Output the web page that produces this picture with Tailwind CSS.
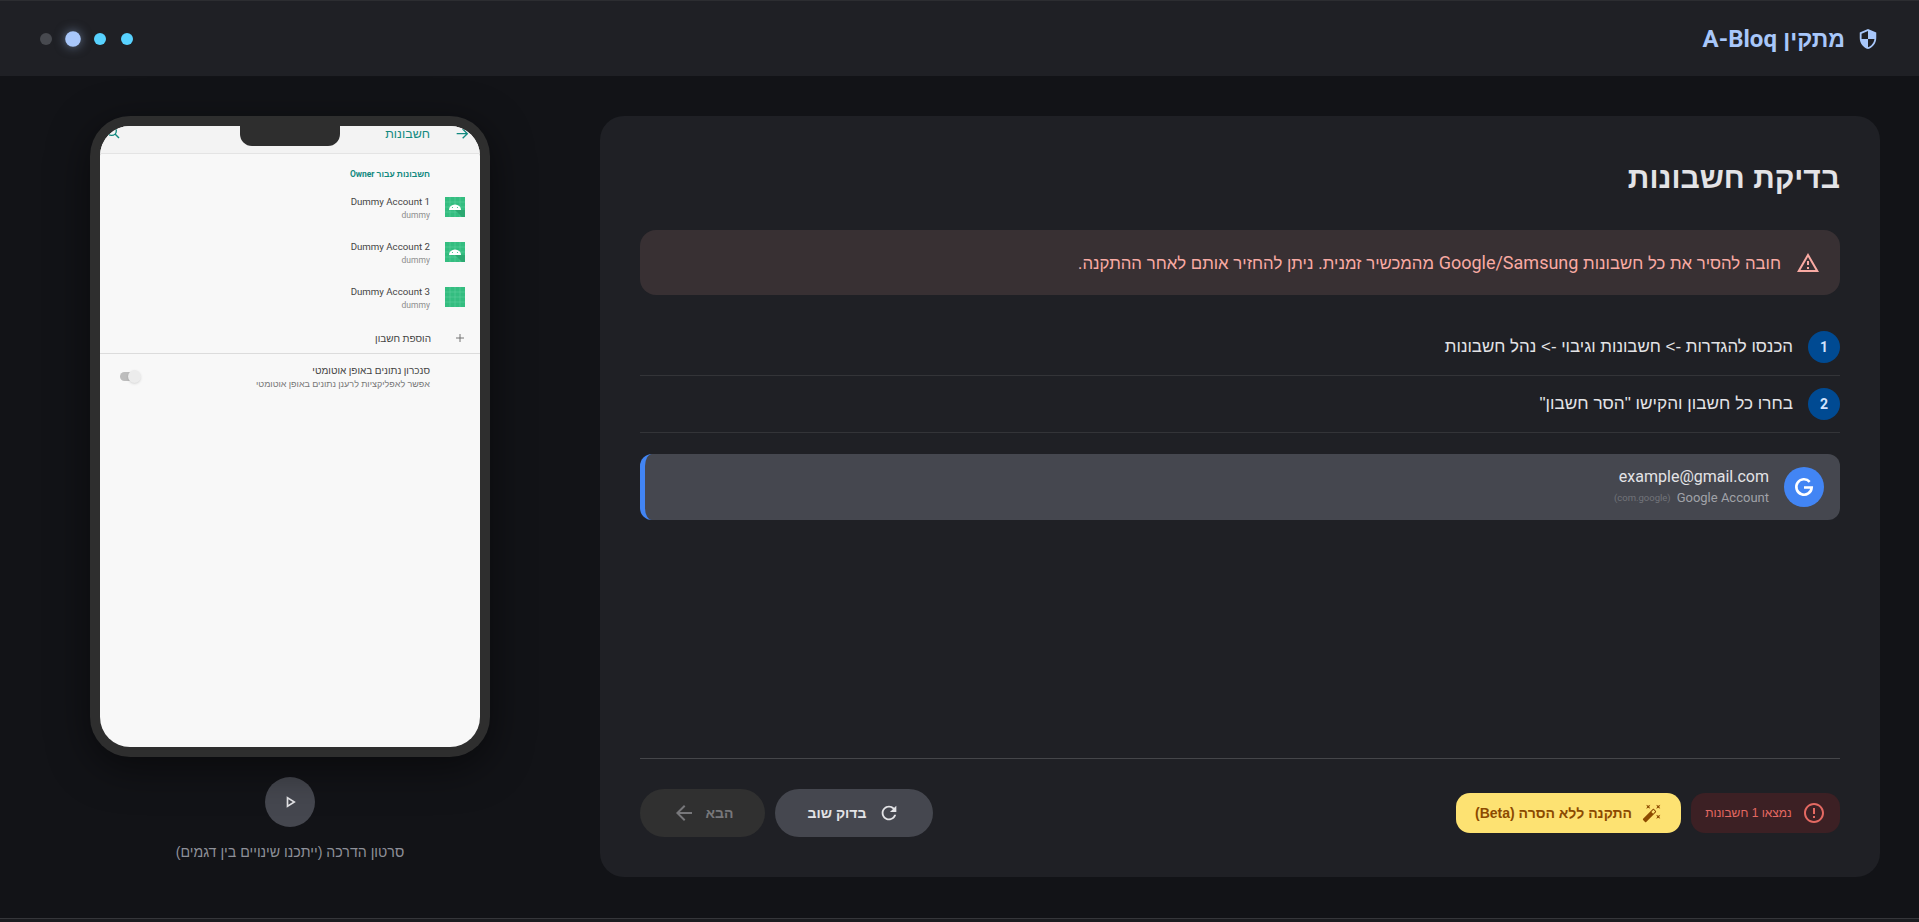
<!DOCTYPE html>
<html lang="he" dir="rtl">
  <head>
    <meta charset="UTF-8" />
    <meta name="viewport" content="width=device-width, initial-scale=1.0" />
    <title>מתקין A-Bloq</title>
    <script src="https://cdn.jsdelivr.net/npm/@tailwindcss/browser@4"></script>
  </head>

  <body class="h-screen overflow-hidden bg-[#121317] font-['Liberation_Sans',sans-serif] text-[#e3e3e6]">
    <div class="flex h-full flex-col">
      <!-- Header -->
      <header class="flex h-[76px] shrink-0 items-center justify-between border-t border-[#2c2d31] bg-[#1f2025] pr-[40px] pl-[40px]">
        <div class="flex items-center gap-[12px] text-[#a8c7fa]">
          <svg class="h-[22px] w-[22px]" viewBox="0 0 24 24" fill="currentColor"><path d="M12 1L3 5v6c0 5.55 3.84 10.74 9 12 5.16-1.26 9-6.45 9-12V5l-9-4zm0 10.99h7c-.53 4.12-3.28 7.79-7 8.94V12H5V6.3l7-3.11v8.8z"/></svg>
          <span class="text-[23px] font-bold leading-none">מתקין <span class="font-['Roboto'] text-[24px]">A-Bloq</span></span>
        </div>
        <!-- Steps -->
        <div class="flex items-center gap-[15px]" dir="ltr">
          <span class="h-[12px] w-[12px] rounded-full bg-[#47494f]"></span>
          <span class="h-[12px] w-[12px] scale-[1.3] rounded-full bg-[#a8c7fa] shadow-[0_0_8px_rgba(168,199,250,0.5)]"></span>
          <span class="h-[12px] w-[12px] rounded-full bg-[#58d2ff]"></span>
          <span class="h-[12px] w-[12px] rounded-full bg-[#58d2ff]"></span>
        </div>
      </header>

      <!-- Content -->
      <main class="flex min-h-0 flex-1 gap-[60px] pt-[40px] pr-[39px] pl-[40px]">
        <!-- Card -->
        <section class="flex h-[761px] flex-1 flex-col rounded-[24px] bg-[#1f2025] px-[40px] pt-[40px] pb-[40px]">
          <h1 class="text-[30px] font-bold leading-[44px] text-[#e3e3e6]">בדיקת חשבונות</h1>

          <div class="mt-[30px] flex h-[65px] items-center gap-[15px] rounded-[16px] bg-[#383033] px-[20px] text-[#f9aaa3]">
            <svg class="h-[24px] w-[24px] shrink-0" viewBox="0 0 24 24" fill="currentColor"><path d="M12 5.99L19.53 19H4.47L12 5.99M12 2L1 21h22L12 2zm1 14h-2v2h2v-2zm0-6h-2v4h2v-4z"/></svg>
            <p class="text-[16.8px]">חובה להסיר את כל חשבונות <span class="font-['Roboto'] text-[18px]">Google/Samsung</span> מהמכשיר זמנית. ניתן להחזיר אותם לאחר ההתקנה.</p>
          </div>

          <ol class="mt-[24px]">
            <li class="flex h-[57px] items-center gap-[15px] border-b border-[#333438]">
              <span class="flex h-[32px] w-[32px] shrink-0 items-center justify-center rounded-full bg-[#004a92] font-['Roboto'] text-[14px] font-bold text-[#d3e3fd]">1</span>
              <span class="text-[16.9px]">הכנסו להגדרות -&gt; חשבונות וגיבוי -&gt; נהל חשבונות</span>
            </li>
            <li class="flex h-[57px] items-center gap-[15px] border-b border-[#333438]">
              <span class="flex h-[32px] w-[32px] shrink-0 items-center justify-center rounded-full bg-[#004a92] font-['Roboto'] text-[14px] font-bold text-[#d3e3fd]">2</span>
              <span class="text-[17.2px]">בחרו כל חשבון והקישו "הסר חשבון"</span>
            </li>
          </ol>

          <!-- Account -->
          <div class="mt-[21px] flex h-[66px] items-center gap-[15px] rounded-[12px] border-l-[5px] border-[#4285f4] bg-[#45474f] pr-[16px] font-['Roboto']">
            <span class="flex h-[40px] w-[40px] shrink-0 items-center justify-center rounded-full bg-[#4285f4]">
              <svg class="h-[22px] w-[22px]" viewBox="0 0 24 24" fill="none" stroke="#fff" stroke-width="2.8"><path d="M18.2 6.3A8.4 8.4 0 1 0 20.4 12.6H12"/></svg>
            </span>
            <div>
              <div class="text-[16px] leading-[20px] text-[#e3e3e6]">example@gmail.com</div>
              <div class="mt-[2px] flex items-center gap-[6px] text-[13px] leading-[18px] text-[#a0a2a8]">
                <span>Google Account</span>
                <span class="text-[9.5px] text-[#72747a]" dir="ltr">(com.google)</span>
              </div>
            </div>
          </div>

          <!-- Footer actions -->
          <div class="mt-auto flex items-center justify-between border-t border-[#45464a] pt-[30px]">
            <div class="flex items-center gap-[10px]">
              <div class="flex h-[40px] w-[149px] items-center justify-center gap-[10px] rounded-[14px] bg-[#3c2024] text-[#e46962]">
                <svg class="h-[24px] w-[24px] shrink-0" viewBox="0 0 24 24" fill="currentColor"><path d="M11 15h2v2h-2zm0-8h2v6h-2zm.99-5C6.47 2 2 6.48 2 12s4.47 10 9.99 10C17.52 22 22 17.52 22 12S17.52 2 11.99 2zM12 20c-4.42 0-8-3.58-8-8s3.58-8 8-8 8 3.58 8 8-3.58 8-8 8z"/></svg>
                <span class="text-[12px]">נמצאו 1 חשבונות</span>
              </div>
              <button class="flex h-[40px] w-[225px] items-center justify-center gap-[10px] rounded-[14px] bg-[#fde272] text-[#8c4a00]">
                <svg class="h-[20px] w-[20px] shrink-0" viewBox="0 0 24 24" fill="currentColor"><path d="M7.5 5.6L10 7 8.6 4.5 10 2 7.5 3.4 5 2l1.4 2.5L5 7zm12 9.8L17 14l1.4 2.5L17 19l2.5-1.4L22 19l-1.4-2.5L22 14zM22 2l-2.5 1.4L17 2l1.4 2.5L17 7l2.5-1.4L22 7l-1.4-2.5zm-7.63 5.29c-.39-.39-1.02-.39-1.41 0L1.29 18.96c-.39.39-.39 1.02 0 1.41l2.34 2.34c.39.39 1.02.39 1.41 0L16.7 11.05c.39-.39.39-1.02 0-1.41l-2.33-2.35zm-1.03 5.49l-2.12-2.12 2.44-2.44 2.12 2.12-2.44 2.44z"/></svg>
                <span class="text-[14px] font-bold">התקנה ללא הסרה (Beta)</span>
              </button>
            </div>
            <div class="flex items-center gap-[10px]">
              <button class="flex h-[48px] w-[158px] items-center justify-center gap-[12px] rounded-full bg-[#45474f] text-[#e3e3e6]">
                <svg class="h-[22px] w-[22px] shrink-0" viewBox="0 0 24 24" fill="currentColor"><path d="M17.65 6.35C16.2 4.9 14.21 4 12 4c-4.42 0-7.99 3.58-7.99 8s3.57 8 7.99 8c3.73 0 6.84-2.55 7.73-6h-2.08c-.82 2.33-3.04 4-5.65 4-3.31 0-6-2.69-6-6s2.69-6 6-6c1.66 0 3.14.69 4.22 1.78L13 11h7V4l-2.35 2.35z"/></svg>
                <span class="text-[14px] font-bold">בדוק שוב</span>
              </button>
              <button class="flex h-[48px] w-[125px] items-center justify-center gap-[10px] rounded-full bg-[#303030] text-[#77777a]">
                <span class="text-[14px] font-bold">הבא</span>
                <svg class="h-[24px] w-[24px] shrink-0" viewBox="0 0 24 24" fill="currentColor"><path d="M20 11H7.83l5.59-5.59L12 4l-8 8 8 8 1.41-1.41L7.83 13H20v-2z"/></svg>
              </button>
            </div>
          </div>
        </section>

        <!-- Phone column -->
        <aside class="flex w-[500px] shrink-0 flex-col items-center">
          <div class="relative h-[641px] w-[400px] rounded-[40px] bg-[#2e2e2e] p-[10px] shadow-[0_10px_40px_rgba(0,0,0,0.5)]">
            <div class="absolute top-[10px] left-1/2 z-10 h-[20px] w-[100px] -translate-x-1/2 rounded-b-[12px] bg-[#2e2e2e]"></div>
            <div class="flex h-full flex-col overflow-hidden rounded-[30px] bg-[#f8f8f8] font-['Roboto','Liberation_Sans',sans-serif] text-[#444]">
              <div class="flex h-[28px] shrink-0 items-start justify-between border-b border-[#e4e4e4] bg-[#f3f3f3] pr-[10px] pl-[5px] text-[#12897f]">
                <div class="flex items-center gap-[24px]">
                  <svg class="mt-[-1px] h-[16px] w-[16px]" viewBox="0 0 24 24" fill="none" stroke="currentColor" stroke-width="2"><path d="M20 11.5H4M11 4.5l-7 7 7 7" transform="matrix(-1 0 0 1 24 0)"/></svg>
                  <span class="text-[12.5px] leading-[16px]">חשבונות</span>
                </div>
                <svg class="mt-[-2px] h-[16px] w-[16px]" viewBox="0 0 24 24" fill="none" stroke="currentColor" stroke-width="2"><circle cx="10" cy="10" r="7"/><path d="M15 15l6 6"/></svg>
              </div>

              <div class="pt-[14px] pr-[50px] text-[8.5px] font-bold leading-[12px] text-[#12897f]">חשבונות עבור Owner</div>

              <div class="mt-[15px] flex h-[45px] items-start gap-[15px] pr-[15px]">
                <svg class="mt-[2px] h-[20px] w-[20px]" viewBox="0 0 20 20"><rect width="20" height="20" fill="#34bd80"/><path d="M10 0v20M0 10h20M5 0v20M15 0v20M0 5h20M0 15h20" stroke="#6fd6a6" stroke-width="0.4"/><path d="M10 13l7 7h3v-7z" fill="#2ca871"/><path d="M4 13a6 5.5 0 0 1 12 0z" fill="#fff"/><circle cx="7.5" cy="10.5" r=".6" fill="#34bd80"/><circle cx="12.5" cy="10.5" r=".6" fill="#34bd80"/></svg>
                <div><div class="text-[9.7px] leading-[14px]">Dummy Account 1</div><div class="text-[8.5px] leading-[12px] text-[#8c8c8c]">dummy</div></div>
              </div>
              <div class="flex h-[45px] items-start gap-[15px] pr-[15px]">
                <svg class="mt-[2px] h-[20px] w-[20px]" viewBox="0 0 20 20"><rect width="20" height="20" fill="#34bd80"/><path d="M10 0v20M0 10h20M5 0v20M15 0v20M0 5h20M0 15h20" stroke="#6fd6a6" stroke-width="0.4"/><path d="M10 13l7 7h3v-7z" fill="#2ca871"/><path d="M4 13a6 5.5 0 0 1 12 0z" fill="#fff"/><circle cx="7.5" cy="10.5" r=".6" fill="#34bd80"/><circle cx="12.5" cy="10.5" r=".6" fill="#34bd80"/></svg>
                <div><div class="text-[9.7px] leading-[14px]">Dummy Account 2</div><div class="text-[8.5px] leading-[12px] text-[#8c8c8c]">dummy</div></div>
              </div>
              <div class="flex h-[45px] items-start gap-[15px] pr-[15px]">
                <svg class="mt-[2px] h-[20px] w-[20px]" viewBox="0 0 20 20"><rect width="20" height="20" fill="#34bd80"/><path d="M10 0v20M0 10h20M5 0v20M15 0v20M0 5h20M0 15h20" stroke="#6fd6a6" stroke-width="0.4"/></svg>
                <div><div class="text-[9.7px] leading-[14px]">Dummy Account 3</div><div class="text-[8.5px] leading-[12px] text-[#8c8c8c]">dummy</div></div>
              </div>

              <div class="flex h-[16px] items-center gap-[24px] pr-[15px]">
                <svg class="h-[10px] w-[10px] shrink-0" viewBox="0 0 10 10" fill="none" stroke="#666" stroke-width="0.9"><path d="M5 1v8M1 5h8"/></svg>
                <span class="text-[10px]">הוספת חשבון</span>
              </div>
              <div class="mt-[7px] border-t border-[#dcdcdc] pt-[10px] pr-[50px] pl-[20px]">
                <div class="flex items-center justify-between">
                  <div>
                    <div class="text-[10px] leading-[14px]">סנכרון נתונים באופן אוטומטי</div>
                    <div class="text-[9px] leading-[13px] text-[#777]">אפשר לאפליקציות לרענן נתונים באופן אוטומטי</div>
                  </div>
                  <div class="relative mt-[-3px] h-[9px] w-[17px] rounded-full bg-[#bdbdbd]">
                    <span class="absolute top-[-2px] left-[8px] h-[13px] w-[13px] rounded-full bg-[#ececec] shadow-sm"></span>
                  </div>
                </div>
              </div>
            </div>
          </div>

          <button class="mt-[20px] flex h-[50px] w-[50px] items-center justify-center rounded-full bg-[#45474f] text-[#e3e3e6]">
            <svg class="h-[20px] w-[20px]" viewBox="0 0 24 24" fill="currentColor"><path d="M10 8.64L15.27 12 10 15.36V8.64M8 5v14l11-7L8 5z"/></svg>
          </button>
          <p class="mt-[15px] text-[14.2px] text-[#8e9099]">סרטון הדרכה (ייתכנו שינויים בין דגמים)</p>
        </aside>
      </main>

      <div class="h-[4px] shrink-0 border-t border-[#35363a] bg-[#1a1b1f]"></div>
    </div>
  </body>
</html>
